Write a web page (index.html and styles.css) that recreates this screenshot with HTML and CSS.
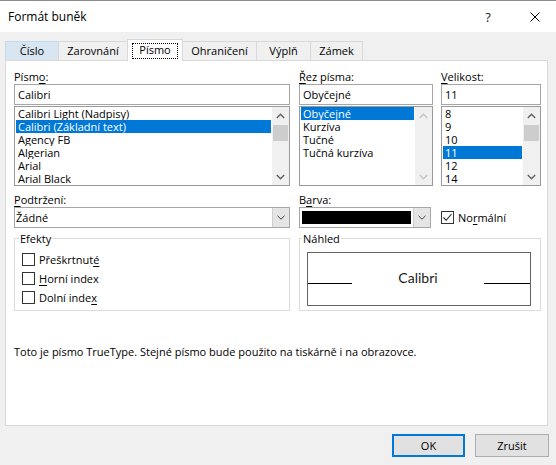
FILE: index.html
```html
<!DOCTYPE html>
<html lang="cs">
<head>
<meta charset="utf-8">
<title>Formát buněk</title>
<link rel="stylesheet" href="styles.css">
</head>
<body>
<div class="dialog">
  <div class="titlebar">
    <span class="title">Formát buněk</span>
    <span class="help">?</span>
    <svg class="close" width="10" height="10" viewBox="0 0 10 10"><path d="M0.5 0.5 L9.5 9.5 M9.5 0.5 L0.5 9.5" stroke="#000" stroke-width="1" fill="none"/></svg>
  </div>

  <div class="tabs">
    <div class="tab hover w53">Číslo</div>
    <div class="tab w69">Zarovnání</div>
    <div class="tab active"><span class="focus">Písmo</span></div>
    <div class="tab w73 nol">Ohraničení</div>
    <div class="tab w54">Výplň</div>
    <div class="tab w53 last">Zámek</div>
  </div>

  <div class="panel">
    <div class="row-top">
      <div class="col c-font">
        <div class="lbl">Písm<u>o</u>:</div>
        <div class="input">Calibri</div>
        <div class="list">
          <div class="items">
            <div class="item">Calibri Light (Nadpisy)</div>
            <div class="item sel">Calibri (Základní text)</div>
            <div class="item">Agency FB</div>
            <div class="item">Algerian</div>
            <div class="item">Arial</div>
            <div class="item">Arial Black</div>
          </div>
          <div class="scroll">
            <div class="sb-btn"><svg width="9" height="6" viewBox="0 0 9 6"><path d="M0.8 5 L4.5 1.3 L8.2 5" stroke="#606060" stroke-width="1.4" fill="none"/></svg></div>
            <div class="thumb"></div>
            <div class="sb-track"></div>
            <div class="sb-btn"><svg width="9" height="6" viewBox="0 0 9 6"><path d="M0.8 1 L4.5 4.7 L8.2 1" stroke="#606060" stroke-width="1.4" fill="none"/></svg></div>
          </div>
        </div>
      </div>

      <div class="col c-style">
        <div class="lbl"><u>Ř</u>ez písma:</div>
        <div class="input">Obyčejné</div>
        <div class="list">
          <div class="items">
            <div class="item sel">Obyčejné</div>
            <div class="item">Kurzíva</div>
            <div class="item">Tučné</div>
            <div class="item">Tučná kurzíva</div>
          </div>
          <div class="scroll">
            <div class="sb-btn"><svg width="9" height="6" viewBox="0 0 9 6"><path d="M0.8 5 L4.5 1.3 L8.2 5" stroke="#c4c4c4" stroke-width="1.4" fill="none"/></svg></div>
            <div class="sb-track"></div>
            <div class="sb-btn"><svg width="9" height="6" viewBox="0 0 9 6"><path d="M0.8 1 L4.5 4.7 L8.2 1" stroke="#c4c4c4" stroke-width="1.4" fill="none"/></svg></div>
          </div>
        </div>
      </div>

      <div class="col c-size">
        <div class="lbl"><u>V</u>elikost:</div>
        <div class="input">11</div>
        <div class="list">
          <div class="items">
            <div class="item">8</div>
            <div class="item">9</div>
            <div class="item">10</div>
            <div class="item sel">11</div>
            <div class="item">12</div>
            <div class="item">14</div>
          </div>
          <div class="scroll">
            <div class="sb-btn"><svg width="9" height="6" viewBox="0 0 9 6"><path d="M0.8 5 L4.5 1.3 L8.2 5" stroke="#606060" stroke-width="1.4" fill="none"/></svg></div>
            <div class="thumb"></div>
            <div class="sb-track"></div>
            <div class="sb-btn"><svg width="9" height="6" viewBox="0 0 9 6"><path d="M0.8 1 L4.5 4.7 L8.2 1" stroke="#606060" stroke-width="1.4" fill="none"/></svg></div>
          </div>
        </div>
      </div>
    </div>

    <div class="row-mid">
      <div class="col c-font">
        <div class="lbl"><u>P</u>odtržení:</div>
        <div class="combo">
          <span class="combo-text">Žádné</span>
          <span class="combo-btn"><svg width="8" height="5" viewBox="0 0 8 5"><path d="M0.5 0.8 L4 4.2 L7.5 0.8" stroke="#404040" stroke-width="1" fill="none"/></svg></span>
        </div>
      </div>
      <div class="col c-color">
        <div class="lbl">B<u>a</u>rva:</div>
        <div class="combo">
          <span class="swatch"></span>
          <span class="combo-btn"><svg width="8" height="5" viewBox="0 0 8 5"><path d="M0.5 0.8 L4 4.2 L7.5 0.8" stroke="#404040" stroke-width="1" fill="none"/></svg></span>
        </div>
      </div>
      <label class="check normal">
        <span class="box"><svg width="11" height="11" viewBox="0 0 11 11"><path d="M1.5 5.5 L4.2 8.3 L9.5 2" stroke="#222" stroke-width="1.1" fill="none"/></svg></span>
        <span>No<u>r</u>mální</span>
      </label>
    </div>

    <div class="row-groups">
      <fieldset class="group g-effects">
        <legend>Efekty</legend>
        <label class="check"><span class="box"></span><span>Přeškrtnut<u>é</u></span></label>
        <label class="check"><span class="box"></span><span><u>H</u>orní index</span></label>
        <label class="check"><span class="box"></span><span>Dolní inde<u>x</u></span></label>
      </fieldset>
      <fieldset class="group g-preview">
        <legend>Náhled</legend>
        <div class="preview">
          <span class="pline pl-left"></span>
          <span class="ptext">Calibri</span>
          <span class="pline pl-right"></span>
        </div>
      </fieldset>
    </div>

    <p class="note">Toto je písmo TrueType. Stejné písmo bude použito na tiskárně i na obrazovce.</p>
  </div>

  <div class="buttons">
    <div class="btn ok">OK</div>
    <div class="btn cancel">Zrušit</div>
  </div>
</div>
</body>
</html>
```

FILE: styles.css
```css
* { box-sizing: border-box; }
html, body { margin: 0; padding: 0; }
body {
  width: 556px;
  height: 465px;
  overflow: hidden;
  background: #f0f0f0;
  font-family: "Open Sans", "Noto Sans", sans-serif;
  font-size: 11px;
  color: #000;
}
u { text-decoration-thickness: 1px; text-underline-offset: 2px; }

.dialog {
  height: 465px;
  border-top: 1px solid #8c8c8c;
  display: flex;
  flex-direction: column;
}

/* title bar */
.titlebar {
  height: 31px;
  background: #fff;
  display: flex;
  align-items: center;
  padding-left: 8px;
}
.title { flex: 1; font-size: 12px; }
.help { width: 14px; margin-right: 35px; text-align: center; font-size: 13px; color: #222; }
.close { margin-right: 16px; display: block; }

/* tabs */
.tabs {
  display: flex;
  align-items: flex-start;
  height: 22px;
  margin-top: 7px;
  padding-left: 5px;
  position: relative;
  z-index: 1;
}
.tab {
  height: 19px;
  margin-top: 2px;
  border-top: 1px solid #d9d9d9;
  border-left: 1px solid #d9d9d9;
  background: #f0f0f0;
  text-align: center;
  line-height: 18px;
}
.tab.hover { background: #d8e6f2; border-color: #c3d9ee; }
.tab.last { border-right: 1px solid #d9d9d9; }
.tab.nol { border-left: none; }
.w53 { width: 53px; }
.w69 { width: 69px; }
.w73 { width: 73px; }
.w54 { width: 54px; }
.tab.active {
  width: 56px;
  height: 22px;
  margin-top: 0;
  background: #fff;
  border: 1px solid #d9d9d9;
  border-bottom: none;
  padding-top: 3px;
}
.focus {
  display: block;
  margin: 0 4px;
  height: 16px;
  line-height: 14px;
  outline: 1px dotted #000;
  outline-offset: -1px;
}

/* panel */
.panel {
  margin: -1px 8px 0 5px;
  height: 366px;
  background: #fff;
  border: 1px solid #d9d9d9;
  padding: 8px 6px 0 8px;
}
.row-top, .row-mid, .row-groups { display: flex; align-items: flex-start; }
.c-font { width: 276px; }
.c-style { width: 134px; margin-left: 9px; }
.c-size { width: 100px; margin-left: 8px; }
.c-color { width: 132px; margin-left: 9px; }

.lbl { height: 15px; line-height: 15px; }
.input {
  height: 21px;
  border: 1px solid #a6a6a6;
  background: #fff;
  padding-left: 3px;
  line-height: 19px;
}
.list {
  margin-top: 1px;
  height: 80px;
  border: 1px solid #9a9a9a;
  display: flex;
  background: #fff;
}
.items { flex: 1; padding: 0 1px; min-width: 0; }
.item {
  height: 13px;
  line-height: 13px;
  padding-left: 2px;
  white-space: nowrap;
  overflow: hidden;
}
.item.sel { background: #0078d7; color: #fff; }

.scroll {
  width: 17px;
  display: flex;
  flex-direction: column;
  background: #f0f0f0;
}
.sb-btn {
  height: 17px;
  display: flex;
  align-items: center;
  justify-content: center;
}
.sb-btn svg { display: block; }
.thumb { height: 16px; margin: 1px 1px 0; background: #cdcdcd; }
.sb-track { flex: 1; }

/* middle row */
.row-mid { margin-top: 6px; }
.combo {
  height: 21px;
  border: 1px solid #a6a6a6;
  background: #fff;
  display: flex;
  align-items: stretch;
}
.combo-text { flex: 1; padding-left: 1px; line-height: 19px; }
.combo-btn {
  width: 17px;
  background: #e5e5e5;
  border-left: 1px solid #cfcfcf;
  display: flex;
  align-items: center;
  justify-content: center;
}
.swatch { flex: 1; margin: 3px 2px 3px 2px; background: #000; }

.check {
  display: flex;
  align-items: center;
  height: 19px;
}
.box {
  width: 13px;
  height: 13px;
  border: 1px solid #333;
  background: #fff;
  margin-right: 4px;
  display: flex;
  align-items: center;
  justify-content: center;
}
.box svg { display: block; }
.check.normal { margin-left: 10px; margin-top: 16px; }

/* groups */
.row-groups { margin-top: 3px; }
.group {
  margin: 0;
  min-width: 0;
  border: 1px solid #dcdcdc;
  height: 80px;
}
.group legend { padding: 0 1px; line-height: 15px; }
.g-effects { width: 276px; padding: 4px 0 0 4px; }
.g-effects .check { margin-left: 3px; }
.g-preview { width: 242px; margin-left: 9px; padding: 0 0 0 2px; }
.preview {
  margin: 6px 0 0 5px;
  width: 224px;
  height: 54px;
  border: 1px solid #646464;
  display: flex;
  align-items: flex-start;
}
.pline { height: 1px; background: #000; margin-top: 30px; }
.pl-left { width: 44px; }
.pl-right { width: 46px; }
.ptext {
  flex: 1;
  text-align: center;
  margin-top: 17px;
  line-height: 16px;
  font-family: Lato, "Open Sans", sans-serif;
  font-size: 14px;
  color: #1a1a1a;
}

.note { margin: 33px 0 0 0; line-height: 15px; }

/* buttons */
.buttons {
  display: flex;
  justify-content: flex-end;
  gap: 10px;
  margin-top: 8px;
  padding-right: 7px;
}
.btn {
  height: 23px;
  background: #e1e1e1;
  border: 1px solid #adadad;
  text-align: center;
  line-height: 21px;
}
.btn.ok { width: 73px; border: 2px solid #0078d7; line-height: 19px; }
.btn.cancel { width: 74px; }
```
